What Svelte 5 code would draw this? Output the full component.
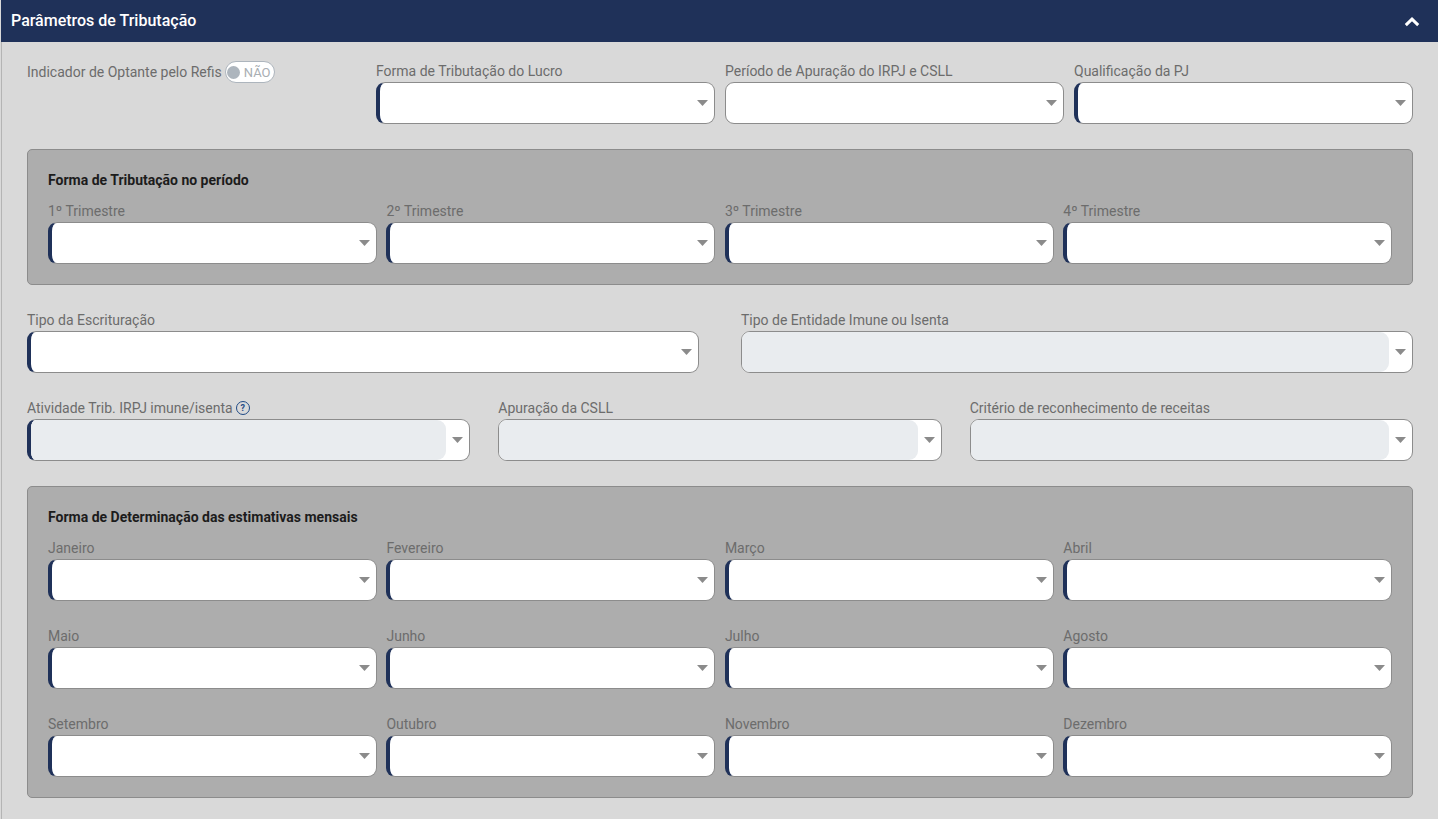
<script>
  const trimestres = ['1º Trimestre', '2º Trimestre', '3º Trimestre', '4º Trimestre'];
  const meses = ['Janeiro', 'Fevereiro', 'Março', 'Abril', 'Maio', 'Junho', 'Julho', 'Agosto', 'Setembro', 'Outubro', 'Novembro', 'Dezembro'];
</script>

{#snippet caret()}
  <svg class="caret" width="11" height="6" viewBox="0 0 11 6" aria-hidden="true"><polygon points="0,0 11,0 5.5,6" /></svg>
{/snippet}

{#snippet select(label, required = true, disabled = false, help = false)}
  <div class="field">
    <div class="label">
      {label}
      {#if help}
        <span class="help">?</span>
      {/if}
    </div>
    <div class="box" class:required>
      {#if disabled}<div class="fill"></div>{/if}
      {@render caret()}
    </div>
  </div>
{/snippet}

<div class="page">
  <header class="head">
    <h1>Parâmetros de Tributação</h1>
    <svg class="chev" width="16" height="10" viewBox="0 0 16 10" aria-hidden="true">
      <path d="M1.8 8.2 8 2.2l6.2 6" fill="none" stroke="#fff" stroke-width="3" />
    </svg>
  </header>

  <main class="body">
    <div class="row four">
      <div class="refis">
        <span class="label inline">Indicador de Optante pelo Refis</span>
        <span class="toggle"><span class="knob"></span><span class="nao">NÃO</span></span>
      </div>
      {@render select('Forma de Tributação do Lucro')}
      {@render select('Período de Apuração do IRPJ e CSLL', false)}
      {@render select('Qualificação da PJ')}
    </div>

    <section class="panel first">
      <h2>Forma de Tributação no período</h2>
      <div class="grid">
        {#each trimestres as t}
          {@render select(t)}
        {/each}
      </div>
    </section>

    <div class="row two">
      {@render select('Tipo da Escrituração')}
      {@render select('Tipo de Entidade Imune ou Isenta', false, true)}
    </div>

    <div class="row three">
      {@render select('Atividade Trib. IRPJ imune/isenta', true, true, true)}
      {@render select('Apuração da CSLL', false, true)}
      {@render select('Critério de reconhecimento de receitas', false, true)}
    </div>

    <section class="panel second">
      <h2>Forma de Determinação das estimativas mensais</h2>
      <div class="grid">
        {#each meses as m}
          {@render select(m)}
        {/each}
      </div>
    </section>
  </main>
</div>

<style>
  :global(body) {
    margin: 0;
    background: #d9d9d9;
  }
  .page {
    height: 819px;
    box-sizing: border-box;
    border-left: 1px solid #b4b4b4;
    margin-left: 1px;
    font-family: Roboto, "Liberation Sans", sans-serif;
    background: #d9d9d9;
  }
  .head {
    height: 42px;
    margin-left: -1px;
    background: #1f3159;
    display: flex;
    align-items: center;
    justify-content: space-between;
    padding: 0 18px 0 10px;
    box-sizing: border-box;
    color: #fff;
  }
  h1 {
    margin: 0;
    font-size: 16px;
    font-weight: 500;
    line-height: 20px;
  }
  .chev {
    display: block;
    margin-top: 1px;
  }
  .body {
    padding: 18px 25px 0 25px;
  }
  .row {
    display: grid;
  }
  .four {
    grid-template-columns: repeat(4, 1fr);
    column-gap: 10px;
  }
  .two {
    grid-template-columns: repeat(2, 1fr);
    column-gap: 42px;
    margin-top: 24px;
  }
  .three {
    grid-template-columns: repeat(3, 1fr);
    column-gap: 28px;
    margin-top: 24px;
  }
  .label {
    height: 22px;
    font-size: 14px;
    line-height: 22px;
    color: #6c6c6c;
    white-space: nowrap;
    display: flex;
    align-items: center;
    gap: 3px;
  }
  .refis {
    display: flex;
    align-items: flex-start;
    gap: 3px;
    padding-top: 1px;
  }
  .inline {
    display: block;
  }
  .toggle {
    width: 50px;
    height: 22px;
    box-sizing: border-box;
    border: 1px solid #adb5bd;
    border-radius: 11px;
    background: #fff;
    display: flex;
    align-items: center;
    gap: 4px;
    padding-left: 1px;
  }
  .knob {
    width: 13px;
    height: 13px;
    border-radius: 50%;
    background: #adb5bd;
  }
  .nao {
    font-size: 13px;
    color: #a9aeb3;
    line-height: 1;
  }
  .help {
    width: 12px;
    height: 12px;
    border: 1px solid #1f4a86;
    border-radius: 50%;
    color: #1f4a86;
    font-size: 9px;
    font-weight: 700;
    line-height: 12px;
    text-align: center;
    display: inline-block;
  }
  .box {
    position: relative;
    height: 42px;
    box-sizing: border-box;
    border: 1px solid #8c8c8c;
    border-radius: 9px;
    background: #fff;
    overflow: hidden;
    display: flex;
    align-items: center;
    justify-content: flex-end;
    padding-right: 6px;
  }
  .required {
    border-left: 4px solid #1f3159;
  }
  .fill {
    flex: 1;
    align-self: stretch;
    background: #e9ecef;
    border-radius: 0 9px 9px 0;
    margin: 0 6px 0 0;
  }
  .caret {
    display: block;
    flex: none;
    fill: #8b8b8b;
  }
  .panel {
    background: #adadad;
    border: 1px solid #8c8c8c;
    border-radius: 5px;
    padding: 20px 20px 20px 20px;
  }
  .first {
    margin-top: 25px;
  }
  .second {
    margin-top: 25px;
  }
  h2 {
    margin: 0 0 10px;
    font-size: 14px;
    font-weight: 700;
    line-height: 20px;
    color: #1c1c1c;
  }
  .grid {
    display: grid;
    grid-template-columns: repeat(4, 1fr);
    column-gap: 9.75px;
    row-gap: 24px;
  }
</style>
